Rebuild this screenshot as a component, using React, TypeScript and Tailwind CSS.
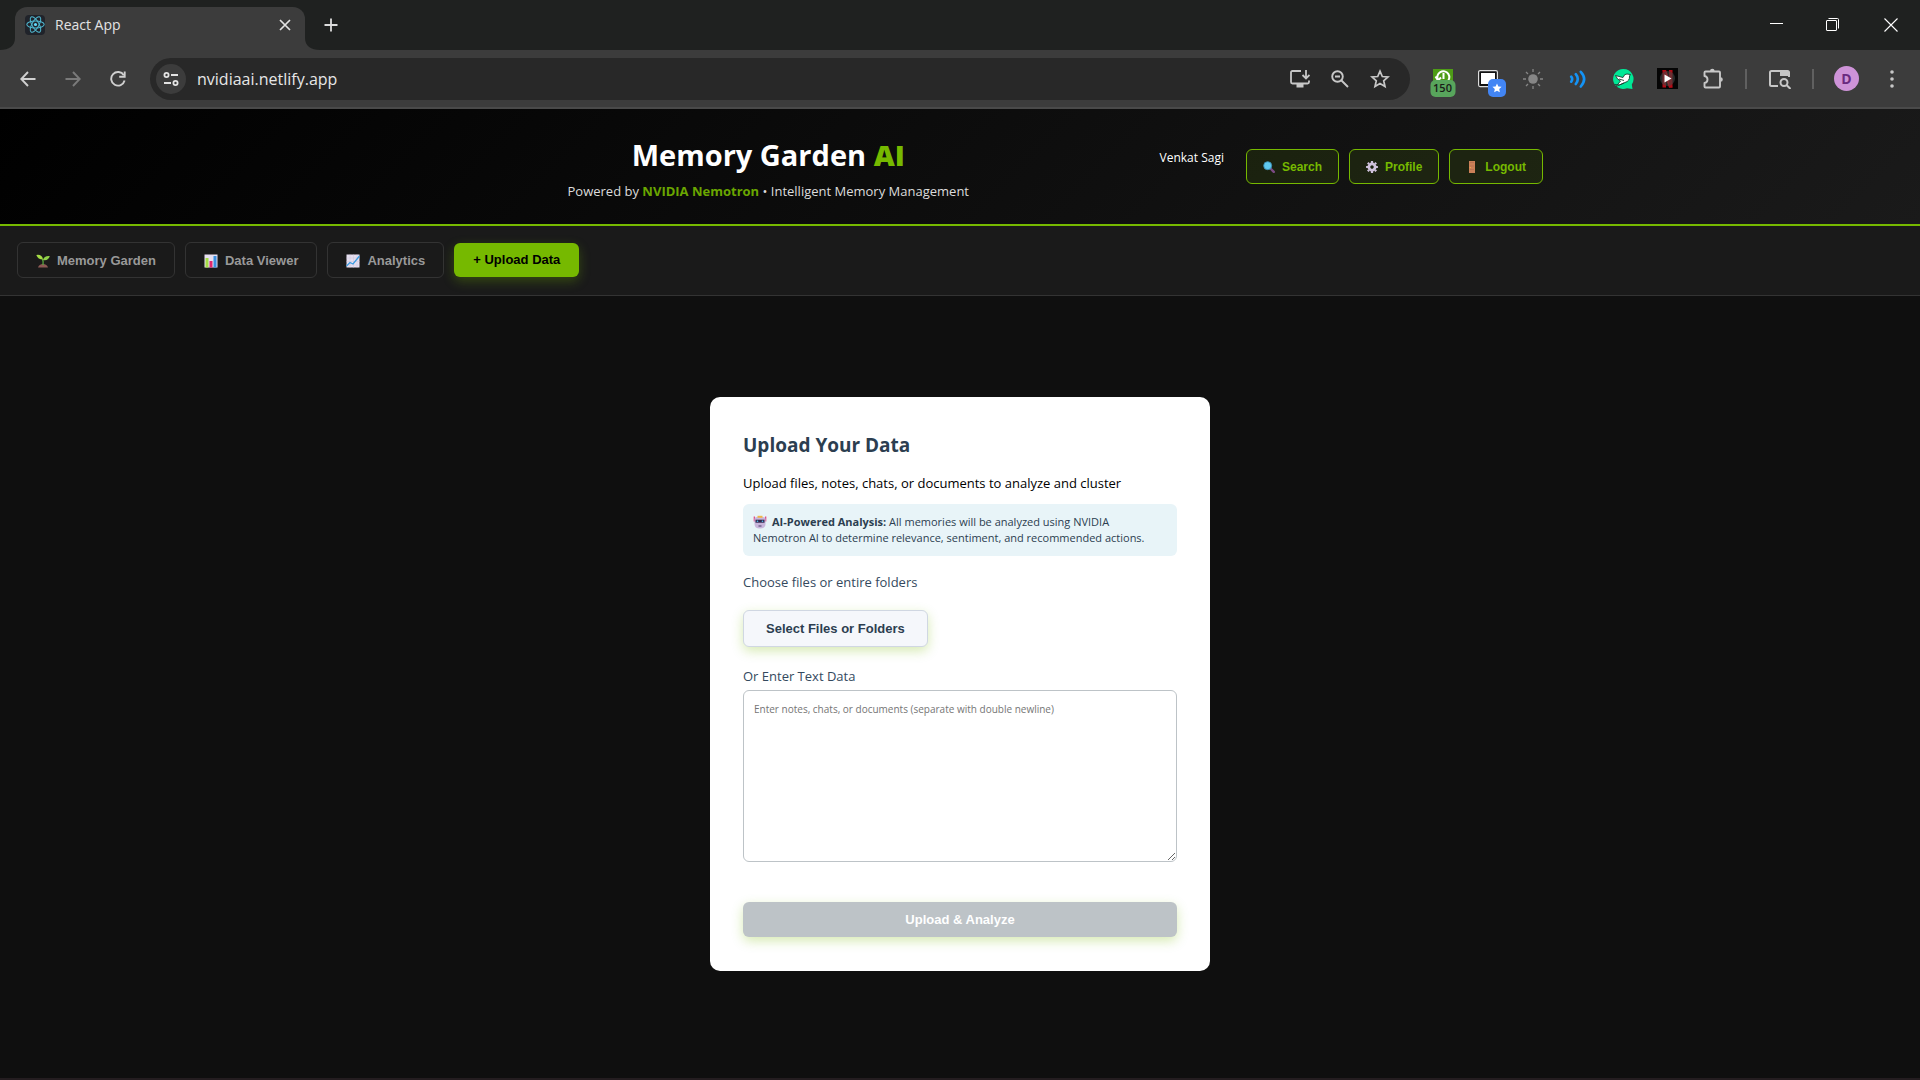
import { useState } from 'react';
import type { ReactNode } from 'react';

function ReactLogo() {
  return (
    <span className="flex h-5 w-5 shrink-0 items-center justify-center rounded-sm bg-[#20232a]">
      <svg viewBox="-12 -12 24 24" className="h-[19px] w-[19px]" fill="none" stroke="#4fb8d0" strokeWidth="1.3" aria-hidden="true">
        <circle r="2" fill="#61dafb" stroke="none" />
        <ellipse rx="11" ry="4.3" />
        <ellipse rx="11" ry="4.3" transform="rotate(60)" />
        <ellipse rx="11" ry="4.3" transform="rotate(120)" />
      </svg>
    </span>
  );
}

function TabStrip() {
  return (
    <div className="flex h-[50px] items-end bg-[#1f2120]">
      <svg viewBox="0 0 15 12" className="h-3 w-[15px]" aria-hidden="true">
        <path d="M15 0C15 8 9 12 0 12H15Z" fill="#3c3c3c" />
      </svg>
      <div className="flex h-[43px] w-[290px] items-center rounded-t-xl bg-[#3c3c3c] pr-3 pb-2 pl-2.5">
        <ReactLogo />
        <span className="ml-2.5 flex-1 text-sm text-[#e3e3e3]">React App</span>
        <button type="button" aria-label="Close tab" className="flex h-4 w-4 items-center justify-center text-[#e3e3e3]">
          <svg viewBox="0 0 12 12" className="h-3 w-3" stroke="currentColor" strokeWidth="1.7" aria-hidden="true">
            <path d="M1 1l10 10M11 1L1 11" />
          </svg>
        </button>
      </div>
      <svg viewBox="0 0 15 12" className="h-3 w-[15px]" aria-hidden="true">
        <path d="M0 0C0 8 6 12 15 12H0Z" fill="#3c3c3c" />
      </svg>
      <button type="button" aria-label="New tab" className="flex h-[50px] w-[22px] items-center justify-center text-[#dcdcdc]">
        <svg viewBox="0 0 14 14" className="h-3.5 w-3.5" stroke="currentColor" strokeWidth="1.8" aria-hidden="true">
          <path d="M7 0.5v13M0.5 7h13" />
        </svg>
      </button>
      <div className="ml-auto flex h-[50px] text-white">
        <button type="button" aria-label="Minimize" className="flex w-[54px] items-center justify-center">
          <svg viewBox="0 0 14 14" className="h-3.5 w-3.5" stroke="currentColor" aria-hidden="true">
            <path d="M0 5.5h13" />
          </svg>
        </button>
        <button type="button" aria-label="Restore" className="flex w-[58px] items-center justify-center">
          <svg viewBox="0 0 14 14" className="h-3.5 w-3.5" fill="none" stroke="currentColor" aria-hidden="true">
            <rect x="0.5" y="2.5" width="10" height="10" rx="0.5" />
            <path d="M2.5 0.5H11.5Q12.5 0.5 12.5 1.5V10.5" />
          </svg>
        </button>
        <button type="button" aria-label="Close window" className="flex w-[58px] items-center justify-center">
          <svg viewBox="0 0 14 14" className="h-3.5 w-3.5" stroke="currentColor" strokeWidth="1.1" aria-hidden="true">
            <path d="M0.5 0.5l13 13M13.5 0.5l-13 13" />
          </svg>
        </button>
      </div>
    </div>
  );
}

function ToolButton({ label, children }: { label: string; children: ReactNode }) {
  return (
    <button type="button" aria-label={label} className="flex h-11 w-[45px] shrink-0 items-center justify-center">
      {children}
    </button>
  );
}

function OmniButton({ label, children }: { label: string; children: ReactNode }) {
  return (
    <button type="button" aria-label={label} className="flex h-10 w-10 shrink-0 items-center justify-center text-[#c7c7c7]">
      {children}
    </button>
  );
}

function Separator() {
  return (
    <span className="flex w-[22px] shrink-0 justify-center">
      <span className="h-5 w-0.5 bg-[#606060]" />
    </span>
  );
}

function AddressBar() {
  const [url, setUrl] = useState('nvidiaai.netlify.app');
  return (
    <div className="mx-2.5 flex h-[42px] flex-1 items-center rounded-full bg-[#282828] pr-2.5 pl-1.5">
      <button type="button" aria-label="View site information" className="flex h-[30px] w-[30px] shrink-0 items-center justify-center rounded-full bg-[#3c3c3c]">
        <svg viewBox="0 0 16 14" className="h-3.5 w-4" fill="none" stroke="#e3e3e3" strokeWidth="1.8" aria-hidden="true">
          <circle cx="3.5" cy="3" r="2.1" />
          <path d="M8 3h7M1 11h7" />
          <circle cx="12.5" cy="11" r="2.1" />
        </svg>
      </button>
      <input
        aria-label="Address"
        value={url}
        onChange={(e) => setUrl(e.target.value)}
        className="ml-[11px] min-w-0 flex-1 bg-transparent text-base text-[#e6e6e6] outline-none"
      />
      <OmniButton label="Install app">
        <svg viewBox="0 0 20 18" className="h-[18px] w-5" fill="none" stroke="currentColor" strokeWidth="1.8" aria-hidden="true">
          <path d="M11 1H2.5Q1 1 1 2.5V12Q1 13.5 2.5 13.5H17.5Q19 13.5 19 12V10.5" />
          <path d="M16 0v8M12.5 5L16 8.5L19.5 5" />
          <path d="M6.5 13.5h7v4h-7z" fill="currentColor" stroke="none" />
        </svg>
      </OmniButton>
      <OmniButton label="Zoom">
        <svg viewBox="0 0 18 18" className="h-[18px] w-[18px]" fill="none" stroke="currentColor" strokeWidth="1.9" aria-hidden="true">
          <circle cx="6.5" cy="6.5" r="5.3" />
          <path d="M10.5 10.5l6.5 6.5M4 6.5h5" />
        </svg>
      </OmniButton>
      <OmniButton label="Bookmark this tab">
        <svg viewBox="0 0 20 20" className="h-5 w-5" fill="none" stroke="currentColor" strokeWidth="1.7" aria-hidden="true">
          <path d="M10 2.2l2.3 5.3 5.7.5-4.3 3.8 1.3 5.7-5-3-5 3 1.3-5.7L2 8l5.7-.5z" />
        </svg>
      </OmniButton>
    </div>
  );
}

function Toolbar() {
  return (
    <div className="flex h-[59px] items-center border-b-2 border-[#4a4a4a] bg-[#3c3c3c] pr-1.5 pl-[5px]">
      <ToolButton label="Back">
        <svg viewBox="0 0 16 16" className="h-4 w-4" fill="none" stroke="#d0d0d0" strokeWidth="1.9" aria-hidden="true">
          <path d="M15.5 8H1.5M8 1L1.3 8L8 15" />
        </svg>
      </ToolButton>
      <ToolButton label="Forward">
        <svg viewBox="0 0 16 16" className="h-4 w-4" fill="none" stroke="#7a7a7a" strokeWidth="1.9" aria-hidden="true">
          <path d="M0.5 8h14M8 1l6.7 7L8 15" />
        </svg>
      </ToolButton>
      <ToolButton label="Reload">
        <svg viewBox="0 0 16 16" className="h-4 w-4" fill="none" stroke="#d0d0d0" strokeWidth="1.9" aria-hidden="true">
          <path d="M13.8 4.2A6.8 6.8 0 1 0 14.6 9.5" />
          <path d="M14.7 0.5V5.8H9.2" />
        </svg>
      </ToolButton>
      <AddressBar />
      <ToolButton label="Session history">
        <span className="relative flex h-5 w-5 items-center justify-center bg-[#4e9c16]">
          <svg viewBox="0 0 20 20" className="h-5 w-5" fill="none" stroke="#fff" strokeWidth="2" aria-hidden="true">
            <path d="M5 11A6 6 0 1 1 14 13M10.5 4v6M2.5 7.5l2.5 4 3-3" />
          </svg>
          <span className="absolute top-[11px] left-1/2 flex h-[17px] w-[25px] -translate-x-1/2 items-center justify-center rounded-[5px] bg-[#58a55c] text-[11px] font-semibold text-[#181c18]">
            150
          </span>
        </span>
      </ToolButton>
      <ToolButton label="Window capture">
        <span className="relative h-5 w-5">
          <svg viewBox="0 0 20 20" className="h-5 w-5" fill="none" aria-hidden="true">
            <rect x="0.6" y="1.6" width="18.8" height="16" rx="1.5" fill="#111" stroke="#ddd" strokeWidth="1.2" />
            <rect x="3" y="4" width="14" height="11" fill="#fff" />
          </svg>
          <span className="absolute top-[10px] left-[10px] flex h-[18px] w-[18px] items-center justify-center rounded-[5px] bg-[#4285f4]">
            <svg viewBox="0 0 20 20" className="h-2.5 w-2.5" fill="#fff" aria-hidden="true">
              <path d="M10 1l2.7 6 6.5.7-4.8 4.4 1.3 6.5L10 15.3l-5.7 3.3 1.3-6.5L.8 7.7 7.3 7z" />
            </svg>
          </span>
        </span>
      </ToolButton>
      <ToolButton label="Brightness">
        <svg viewBox="0 0 20 20" className="h-5 w-5" fill="none" stroke="#868686" strokeWidth="1.3" aria-hidden="true">
          <circle cx="10" cy="10" r="4.8" fill="#868686" stroke="none" />
          <path d="M10 0v3M10 17v3M0 10h3M17 10h3M3 3l2 2M15 15l2 2M17 3l-2 2M5 15l-2 2" />
        </svg>
      </ToolButton>
      <ToolButton label="Volume">
        <svg viewBox="0 0 18 18" className="h-[18px] w-[18px]" fill="none" stroke="#1493f5" strokeWidth="2.6" strokeLinecap="round" aria-hidden="true">
          <path d="M2.2 6.7Q4.2 9 2.2 11.7M6.8 4.2Q10.8 9 6.8 14M11.8 1.8Q18.5 9 11.8 16.5" />
        </svg>
      </ToolButton>
      <ToolButton label="Chat bird">
        <svg viewBox="0 0 22 22" className="h-[22px] w-[22px]" aria-hidden="true">
          <path d="M11 1a10 10 0 1 0 4 19.2L20.5 21L19.8 16.5A10 10 0 0 0 11 1z" fill="#00e896" />
          <path d="M3.5 7.5L11 9.5Q12.5 5.5 15 6L18.5 6.5L17.5 8Q18 13 13 14.5L4 18.5L8.5 13Q5 11.5 3.5 7.5z" fill="#fff" stroke="#173c30" strokeWidth="0.9" />
          <path d="M7 11l5 1.5M2.5 16.5Q8 18 12 15" fill="none" stroke="#173c30" strokeWidth="0.9" />
        </svg>
      </ToolButton>
      <ToolButton label="Player">
        <svg viewBox="0 0 21 21" className="h-[21px] w-[21px]" aria-hidden="true">
          <path d="M0 0h21v21H0z" fill="#050505" />
          <path d="M5.5 2h3.5l6.5 17.5H12z" fill="#e50914" />
          <path d="M5.5 2h3.5v17.5H5.5zM12 2h3.5v17.5H12z" fill="#b10c16" />
          <circle cx="10.5" cy="10.5" r="7.5" fill="#444" fillOpacity="0.6" />
          <path d="M7.5 6.5v8l7-4z" fill="#fff" />
        </svg>
      </ToolButton>
      <ToolButton label="Extensions">
        <svg viewBox="0 0 22 22" className="h-[22px] w-[22px]" fill="none" stroke="#c7c7c7" strokeWidth="1.9" strokeLinejoin="round" aria-hidden="true">
          <path d="M2.5 4.5Q2.5 3.5 3.5 3.5H17Q18 3.5 18 4.5V18.5Q18 19.5 17 19.5H3.5Q2.5 19.5 2.5 18.5V15Q5.5 14.5 5.5 11.5T2.5 8z" />
          <path d="M8 3a2.3 2.3 0 0 1 4.6 0zM18.5 9.2a2.3 2.3 0 0 1 0 4.6z" fill="#c7c7c7" stroke="none" />
        </svg>
      </ToolButton>
      <Separator />
      <ToolButton label="Search tabs">
        <svg viewBox="0 0 22 20" className="h-5 w-[22px]" fill="none" stroke="#c7c7c7" strokeWidth="2" aria-hidden="true">
          <path d="M9 17H2.5Q1 17 1 15.5V3.5Q1 2 2.5 2H18.5Q20 2 20 3.5V8" />
          <path d="M11 2h9v5h-9z" fill="#c7c7c7" stroke="none" />
          <circle cx="15" cy="13.5" r="3.5" />
          <path d="M17.5 16l4 4" />
        </svg>
      </ToolButton>
      <Separator />
      <ToolButton label="Profile">
        <span className="flex h-[25px] w-[25px] items-center justify-center rounded-full bg-[#ce93d8] text-sm leading-none font-bold text-[#6a2a80]">
          D
        </span>
      </ToolButton>
      <ToolButton label="Menu">
        <svg viewBox="0 0 4 18" className="h-[18px] w-1" fill="#c7c7c7" aria-hidden="true">
          <circle cx="2" cy="2" r="1.8" />
          <circle cx="2" cy="9" r="1.8" />
          <circle cx="2" cy="16" r="1.8" />
        </svg>
      </ToolButton>
    </div>
  );
}

function MagnifierIcon() {
  return (
    <svg viewBox="0 0 12 12" className="h-3 w-3" aria-hidden="true">
      <path d="M7.5 7.5l3.3 3.3" stroke="#7b4a83" strokeWidth="2.4" strokeLinecap="round" />
      <circle cx="4.7" cy="4.7" r="4" fill="#5fc9ef" stroke="#3b8fb5" strokeWidth="0.9" />
    </svg>
  );
}

function GearIcon() {
  return (
    <svg viewBox="-6 -6 12 12" className="h-3 w-3" fill="none" stroke="#cfc2dc" aria-hidden="true">
      <circle r="3.1" strokeWidth="2.8" />
      <path d="M0 -5.9V-4M0 4V5.9M-5.9 0H-4M4 0H5.9M-4.2 -4.2L-3 -3M3 3L4.2 4.2M4.2 -4.2L3 -3M-3 3L-4.2 4.2" strokeWidth="2.2" />
    </svg>
  );
}

function DoorIcon() {
  return (
    <svg viewBox="0 0 12 12" className="h-3 w-3" aria-hidden="true">
      <path d="M3 0h6v12H3z" fill="#cb8058" />
      <path d="M4 1.5h4M4 5h4M4 8.5h4" stroke="#b56d50" strokeWidth="0.7" />
      <circle cx="4.2" cy="6.5" r="0.6" fill="#f5c542" />
    </svg>
  );
}

function SeedlingIcon() {
  return (
    <svg viewBox="0 0 14 14" className="h-3.5 w-3.5" aria-hidden="true">
      <path d="M2 13.5Q3 10 7 10T12 13.5z" fill="#8d5a55" />
      <path d="M7 11Q7.5 7 6.5 5" stroke="#55a03b" strokeWidth="1.5" fill="none" />
      <path d="M0.3 1Q6 0 7 5.5Q2 5.5 0.3 1z" fill="#a5dc45" />
      <path d="M7 6Q8 1.5 13.8 2Q12.5 7 7 6z" fill="#8fd048" />
    </svg>
  );
}

function BarChartIcon() {
  return (
    <svg viewBox="0 0 14 14" className="h-3.5 w-3.5" aria-hidden="true">
      <path d="M0.5 0.5h13v13h-13z" fill="#e6dff0" />
      <path d="M1.5 4h3v9.5h-3z" fill="#a5dc45" />
      <path d="M5.5 7h3v6.5h-3z" fill="#e0286e" />
      <path d="M9.5 2h3v11.5h-3z" fill="#3b8fe0" />
    </svg>
  );
}

function TrendIcon() {
  return (
    <svg viewBox="0 0 14 14" className="h-3.5 w-3.5" fill="none" aria-hidden="true">
      <path d="M0.5 0.5h13v13h-13z" fill="#e6dff0" />
      <path d="M4 0.5v13M7.5 0.5v13M11 0.5v13M0.5 4h13M0.5 7.5h13M0.5 11h13" stroke="#cfc4de" strokeWidth="0.5" />
      <path d="M0.5 12L4 8.5l3 1.5L13.5 2" stroke="#3b9be0" strokeWidth="1.3" />
    </svg>
  );
}

function RobotIcon() {
  return (
    <svg viewBox="0 0 14 14" className="mr-[5px] inline-block h-3.5 w-3.5 align-[-3px]" aria-hidden="true">
      <path d="M1.3 1.5v5M12.7 1.5v5" stroke="#e0407a" strokeWidth="1.2" />
      <path d="M1.5 4Q1.5 2 4 2h6q2.5 0 2.5 2v5q0 4.5-5.5 4.5T1.5 9z" fill="#c9b6dc" />
      <path d="M4.5 0.8h5v2h-5z" fill="#f0b64a" />
      <path d="M2.5 4.7h9v3h-9z" fill="#33284e" />
      <circle cx="4.5" cy="6.2" r="0.8" fill="#4fc3f7" />
      <circle cx="9.5" cy="6.2" r="0.8" fill="#4fc3f7" />
      <path d="M5.5 11h3" stroke="#4b3b66" />
    </svg>
  );
}

const headerActions = [
  { label: 'Search', icon: <MagnifierIcon /> },
  { label: 'Profile', icon: <GearIcon /> },
  { label: 'Logout', icon: <DoorIcon /> },
];

function AppHeader() {
  return (
    <header className="border-b-2 border-[#76b900] bg-[linear-gradient(135deg,#000000,#1a1a1a)] px-8 pt-[27px] pb-[23px]">
      <div className="mx-auto flex max-w-[1166px] items-start">
        <div className="flex-1 text-center">
          <h1 className="text-[29px] leading-[38px] font-bold text-white">
            Memory Garden <span className="font-extrabold text-[#76b900]">AI</span>
          </h1>
          <p className="mt-[7px] text-[13px] leading-5 text-[#dcdcdc]">
            Powered by <strong className="font-bold text-[#6aa600]">NVIDIA Nemotron</strong> • Intelligent Memory Management
          </p>
        </div>
        <div className="flex items-start gap-2.5 pt-[13px]">
          <span className="mr-3 pt-px text-xs leading-4 text-white">Venkat Sagi</span>
          {headerActions.map((action) => (
            <button
              key={action.label}
              type="button"
              className="flex h-[35px] items-center gap-[7px] rounded-md border border-[#76b900] bg-[#76b900]/10 px-4 font-['Liberation_Sans',Arial,sans-serif] text-xs font-bold text-[#76b900]"
            >
              {action.icon}
              {action.label}
            </button>
          ))}
        </div>
      </div>
    </header>
  );
}

const navItems = [
  { label: 'Memory Garden', icon: <SeedlingIcon /> },
  { label: 'Data Viewer', icon: <BarChartIcon /> },
  { label: 'Analytics', icon: <TrendIcon /> },
];

function AppNav() {
  return (
    <nav className="flex h-[70px] items-start gap-2.5 border-b border-[#333] bg-[#1a1a1a] px-[17px] pt-4 font-['Liberation_Sans',Arial,sans-serif] text-[13px] font-bold">
      {navItems.map((item) => (
        <button key={item.label} type="button" className="flex h-9 items-center gap-[7px] rounded-md border border-[#333] px-[18px] pt-0.5 text-[#999]">
          {item.icon}
          {item.label}
        </button>
      ))}
      <button type="button" className="mt-px h-[34px] rounded-md bg-[#76b900] px-[19px] text-black shadow-[0_4px_12px_rgba(118,185,0,0.3)]">
        + Upload Data
      </button>
    </nav>
  );
}

function UploadCard() {
  const [text, setText] = useState('');
  return (
    <section className="w-full max-w-[500px] rounded-[10px] bg-white px-[33px] py-[34px]">
      <h2 className="text-[19px] leading-7 font-bold text-[#2c3e50]">Upload Your Data</h2>
      <p className="mt-3.5 text-[13px] leading-5 text-black">Upload files, notes, chats, or documents to analyze and cluster</p>
      <div className="mt-[11px] rounded-md bg-[#e8f4f8] py-2.5 pr-8 pl-2.5 text-[11px] leading-4 text-[#2c3e50]">
        <RobotIcon />
        <strong>AI-Powered Analysis:</strong> All memories will be analyzed using NVIDIA Nemotron AI to determine relevance, sentiment, and recommended actions.
      </div>
      <p id="files-label" className="mt-4 text-[13px] leading-5 font-medium text-[#34495e]">Choose files or entire folders</p>
      <button
        type="button"
        aria-describedby="files-label"
        className="mt-[18px] block h-[37px] rounded-md border border-[#d0d7e2] bg-[#f5f7fb] px-[22px] font-['Liberation_Sans',Arial,sans-serif] text-[13px] font-bold text-[#2c3e50] shadow-[0_4px_12px_rgba(118,185,0,0.3)]"
      >
        Select Files or Folders
      </button>
      <label htmlFor="text-data" className="mt-[19px] block text-[13px] leading-5 font-medium text-[#34495e]">
        Or Enter Text Data
      </label>
      <textarea
        id="text-data"
        value={text}
        onChange={(e) => setText(e.target.value)}
        placeholder="Enter notes, chats, or documents (separate with double newline)"
        className="mt-1 block h-[172px] w-full resize rounded-md border border-[#bdc3c7] bg-white p-2.5 text-[10px] leading-4 text-black placeholder:text-[#757575]"
      />
      <button
        type="button"
        disabled
        className="mt-10 block h-[35px] w-full rounded-md bg-[#bdc3c7] font-['Liberation_Sans',Arial,sans-serif] text-[13px] font-bold text-white shadow-[0_4px_12px_rgba(118,185,0,0.3)]"
      >
        Upload &amp; Analyze
      </button>
    </section>
  );
}

export default function App() {
  return (
    <div className="flex min-h-screen flex-col border-b-2 border-[#241d20] bg-[#0f0f0f] font-['Open_Sans','Noto_Sans',sans-serif]">
      <TabStrip />
      <Toolbar />
      <AppHeader />
      <AppNav />
      <main className="flex flex-1 items-start justify-center pt-[101px] pb-10">
        <UploadCard />
      </main>
    </div>
  );
}
